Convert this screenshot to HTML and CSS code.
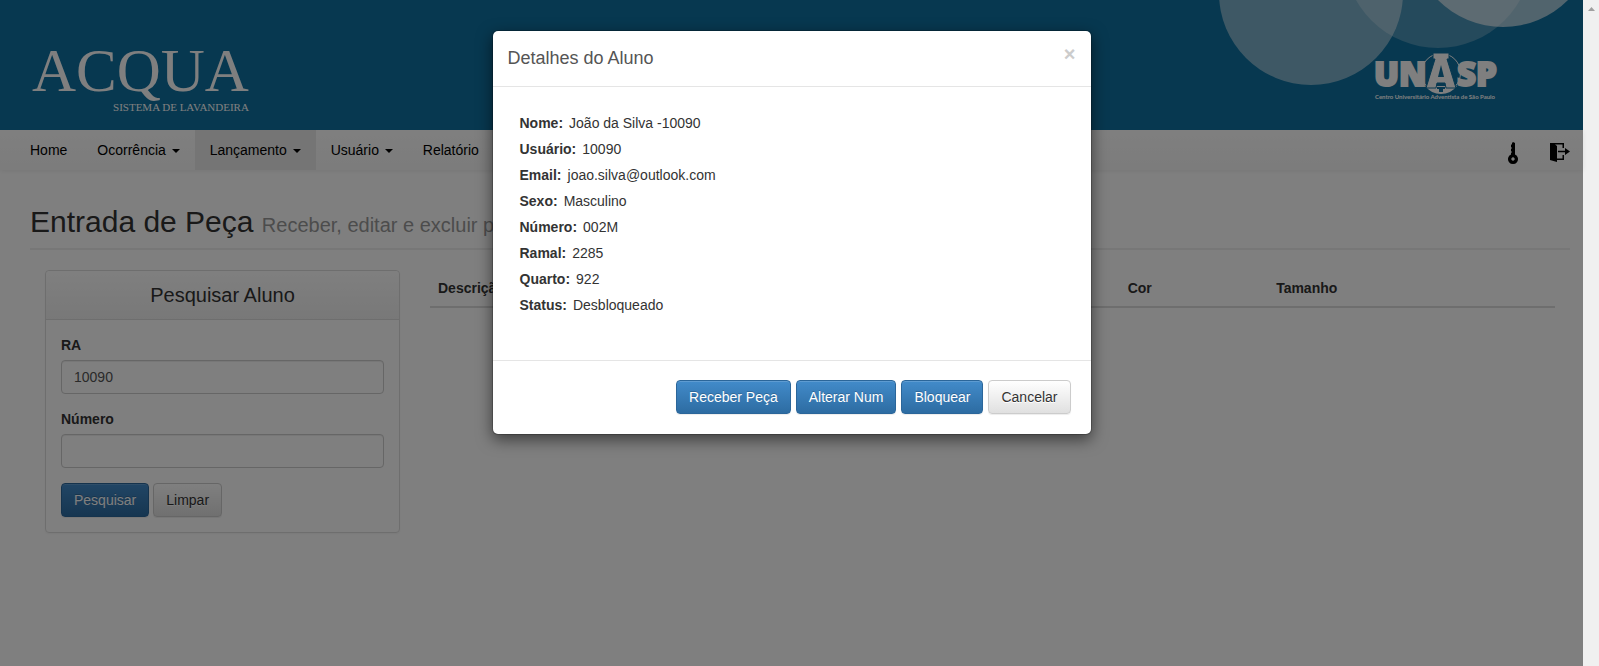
FILE: index.html
```html
<!DOCTYPE html>
<html lang="pt-BR">
<head>
<meta charset="utf-8">
<title>Acqua - Entrada de Peça</title>
<link rel="stylesheet" href="styles.css">
</head>
<body>
<div class="window">
  <div class="page">
    <header class="banner">
      <div class="brand">
        <span class="brand-name">ACQUA</span>
        <span class="brand-tag">SISTEMA DE LAVANDEIRA</span>
      </div>
      <svg class="bubbles" width="383" height="130" viewBox="1200 0 383 130" aria-hidden="true">
        <g fill="#fff">
          <circle cx="1311" cy="-7" r="92" opacity=".46"/>
          <circle cx="1438" cy="-46" r="94" opacity=".25"/>
          <circle cx="1503" cy="-65" r="92" opacity=".62"/>
        </g>
      </svg>
      <svg class="unasp" width="124" height="52" viewBox="0 0 124 52" role="img" aria-label="UNASP">
        <g fill="#fff">
          <circle cx="66" cy="20" r="19.500" fill="none" stroke="#fff"/>
          <path d="M50 33a20 20 0 0 0 32 0z"/>
          <g class="unasp-name" stroke="#fff" stroke-width="2">
            <text x="-1" y="33">UN</text>
            <text x="82" y="33">SP</text>
          </g>
          <path d="M58 0h16v6h-2l9 29h-10l-1-5h-8l-1 5H51l9-29h-2z" stroke="#0e70a0"/>
          <path d="M66 12l-3 12h6z" fill="#0e70a0"/>
          <path d="M62 34h8v2h-2v3h-4v-3h-2z" fill="#0e70a0"/>
          <text class="unasp-tag" x="0" y="46">Centro Universitário Adventista de São Paulo</text>
        </g>
      </svg>
    </header>
    <nav class="nav">
      <ul class="menu">
        <li><a href="#">Home</a></li>
        <li><a href="#">Ocorrência <span class="caret"></span></a></li>
        <li><a href="#" class="active">Lançamento <span class="caret"></span></a></li>
        <li><a href="#">Usuário <span class="caret"></span></a></li>
        <li><a href="#">Relatório</a></li>
      </ul>
      <div class="tools">
        <a href="#" aria-label="Alterar senha"><svg width="12" height="24" viewBox="0 0 12 24"><path fill-rule="evenodd" d="M5 2l1-1 2 1v11.500a5 5 0 1 1-4 0V12l1-1-1-1V8l1-1-1-1V4l1-1zM6 16.300a1.700 1.700 0 1 0 .01 0z"/></svg></a>
        <a href="#" aria-label="Sair"><svg width="20" height="22" viewBox="0 0 20 22"><path d="M0 2h14v5h-1.500V3.500H5L7 5v12.500h5.500V14H14v5H7v2l-7-2z"/><path d="M8 9.700h7V7l5 3.500-5 3.500v-2.700H8z"/></svg></a>
      </div>
    </nav>
    <main class="content">
      <h1 class="page-title">Entrada de Peça <small>Receber, editar e excluir peças</small></h1>
      <div class="row">
        <section class="side">
          <form class="panel">
            <h2 class="panel-title">Pesquisar Aluno</h2>
            <div class="panel-body">
              <label for="ra">RA</label>
              <input id="ra" type="text" value="10090">
              <label for="numero">Número</label>
              <input id="numero" type="text">
              <div class="actions">
                <button type="button" class="btn primary">Pesquisar</button>
                <button type="button" class="btn">Limpar</button>
              </div>
            </div>
          </form>
        </section>
        <section class="results">
          <table>
            <thead><tr><th class="c-desc">Descrição</th><th class="c-cor">Cor</th><th>Tamanho</th></tr></thead>
          </table>
        </section>
      </div>
    </main>
    <div class="backdrop">
      <div class="modal" role="dialog" aria-labelledby="modal-title">
        <div class="modal-header">
          <h2 id="modal-title">Detalhes do Aluno</h2>
          <button type="button" class="close" aria-label="Fechar">×</button>
        </div>
        <dl class="details">
          <div><dt>Nome:</dt><dd>João da Silva -10090</dd></div>
          <div><dt>Usuário:</dt><dd>10090</dd></div>
          <div><dt>Email:</dt><dd>joao.silva@outlook.com</dd></div>
          <div><dt>Sexo:</dt><dd>Masculino</dd></div>
          <div><dt>Número:</dt><dd>002M</dd></div>
          <div><dt>Ramal:</dt><dd>2285</dd></div>
          <div><dt>Quarto:</dt><dd>922</dd></div>
          <div><dt>Status:</dt><dd>Desbloqueado</dd></div>
        </dl>
        <div class="modal-footer">
          <button type="button" class="btn primary">Receber Peça</button>
          <button type="button" class="btn primary">Alterar Num</button>
          <button type="button" class="btn primary">Bloquear</button>
          <button type="button" class="btn">Cancelar</button>
        </div>
      </div>
    </div>
  </div>
  <div class="scrollbar" aria-hidden="true"></div>
</div>
</body>
</html>
```
FILE: styles.css
```css
* { box-sizing: border-box; }
body {
  margin: 0;
  font: 14px/20px "Liberation Sans", Arial, sans-serif;
  color: #333;
  background: #fff;
}
a { color: #000; text-decoration: none; }
h1, h2, dl, dd, ul { margin: 0; padding: 0; font-weight: normal; }
.window { display: flex; min-height: 100vh; }
.page { position: relative; flex: 1; min-width: 0; }

.banner {
  position: relative;
  display: flex;
  justify-content: space-between;
  height: 130px;
  padding: 40px 84px 0 32px;
  background: #0e70a0;
  overflow: hidden;
}
.brand {
  display: flex;
  flex-direction: column;
  align-items: flex-end;
  color: #fff;
  font-family: "Liberation Serif", serif;
}
.brand-name { font-size: 61px; line-height: 62px; }
.brand-tag { font-size: 11px; line-height: 10px; }
.bubbles { position: absolute; top: 0; right: 0; }
.unasp { position: relative; margin-top: 13px; overflow: visible; }
.unasp-name { font: 800 33px "Open Sans", sans-serif; }
.unasp-tag { font: 700 6px Lato, sans-serif; }

.nav {
  display: flex;
  justify-content: space-between;
  padding: 0 13px 0 15px;
  background: linear-gradient(#fff, #f8f8f8);
  box-shadow: 0 1px 5px rgba(0, 0, 0, .075);
}
.menu { display: flex; list-style: none; }
.menu a { display: block; padding: 10px 15px; }
.menu .active { background: #ebebeb; }
.caret {
  display: inline-block;
  margin-left: 2px;
  vertical-align: middle;
  border-top: 4px solid;
  border-left: 4px solid transparent;
  border-right: 4px solid transparent;
}
.tools { display: flex; gap: 31px; padding-top: 11px; }
.tools svg { display: block; }

.content { padding: 36px 13px 0 30px; }
.page-title {
  padding-bottom: 7px;
  margin-bottom: 20px;
  border-bottom: 2px solid #eee;
  font-size: 30px;
  line-height: 32px;
}
.page-title small { font-size: 20px; color: #999; }
.row { display: flex; }
.side { width: 25%; padding: 0 15px; }
.results { width: 75%; padding: 0 15px; }
.panel { border: 1px solid #ddd; border-radius: 4px; box-shadow: 0 1px 2px rgba(0, 0, 0, .05); }
.panel-title {
  padding: 12px 15px;
  border-bottom: 1px solid #ddd;
  background: linear-gradient(#fff, #f1f1f1);
  border-radius: 4px 4px 0 0;
  font-size: 20px;
  line-height: 24px;
  text-align: center;
}
.panel-body { padding: 15px; }
.panel-body label { display: block; margin-bottom: 5px; font-weight: bold; }
.panel-body input {
  display: block;
  width: 100%;
  height: 34px;
  margin-bottom: 15px;
  padding: 6px 12px;
  border: 1px solid #ccc;
  border-radius: 4px;
  background: #fff;
  box-shadow: inset 0 1px 1px rgba(0, 0, 0, .075);
  color: #555;
  font: inherit;
}
.actions { display: flex; gap: 4px; }
.btn {
  height: 34px;
  padding: 6px 12px;
  border: 1px solid #ccc;
  border-radius: 4px;
  background: linear-gradient(#fff, #e0e0e0);
  box-shadow: inset 0 1px 0 rgba(255, 255, 255, .15), 0 1px 1px rgba(0, 0, 0, .075);
  color: #333;
  font: inherit;
  text-shadow: 0 1px 0 #fff;
}
.primary {
  border-color: #2b669a;
  background: linear-gradient(#428bca, #2d6ca2);
  color: #fff;
  text-shadow: 0 -1px 0 rgba(0, 0, 0, .2);
}
table { width: 100%; border-collapse: separate; border-spacing: 0; table-layout: fixed; }
th { padding: 8px; border-bottom: 2px solid #ddd; text-align: left; }
.c-desc { width: 61.3%; }
.c-cor { width: 13.2%; }

.backdrop {
  position: absolute;
  inset: 0;
  padding-top: 30px;
  background: rgba(0, 0, 0, .5);
}
.modal {
  width: 600px;
  margin: 0 auto;
  border: 1px solid rgba(0, 0, 0, .2);
  border-radius: 6px;
  background: #fff;
  background-clip: padding-box;
  box-shadow: 0 5px 15px rgba(0, 0, 0, .5);
}
.modal-header {
  display: flex;
  justify-content: space-between;
  padding: 15px;
  border-bottom: 1px solid #e5e5e5;
}
.modal-header h2 { font-size: 18px; line-height: 25px; color: #555; }
.close {
  height: 16px;
  padding: 0;
  border: 0;
  background: none;
  color: #ccc;
  font: bold 20px/14px "Liberation Sans", Arial, sans-serif;
}
.details { padding: 23px 27px 27px; line-height: 26px; }
.details div { display: flex; gap: 6px; }
.details dt { font-weight: bold; }
.modal-footer {
  display: flex;
  justify-content: flex-end;
  gap: 5px;
  margin-top: 15px;
  padding: 19px 20px 20px;
  border-top: 1px solid #e5e5e5;
}
.scrollbar { width: 16px; padding: 7px 0 0 5px; background: #f0f0f0; }
.scrollbar::before {
  content: "";
  display: block;
  width: 7px;
  height: 4px;
  background: #a0a0a0;
  clip-path: polygon(50% 0, 100% 100%, 0 100%);
}
```
